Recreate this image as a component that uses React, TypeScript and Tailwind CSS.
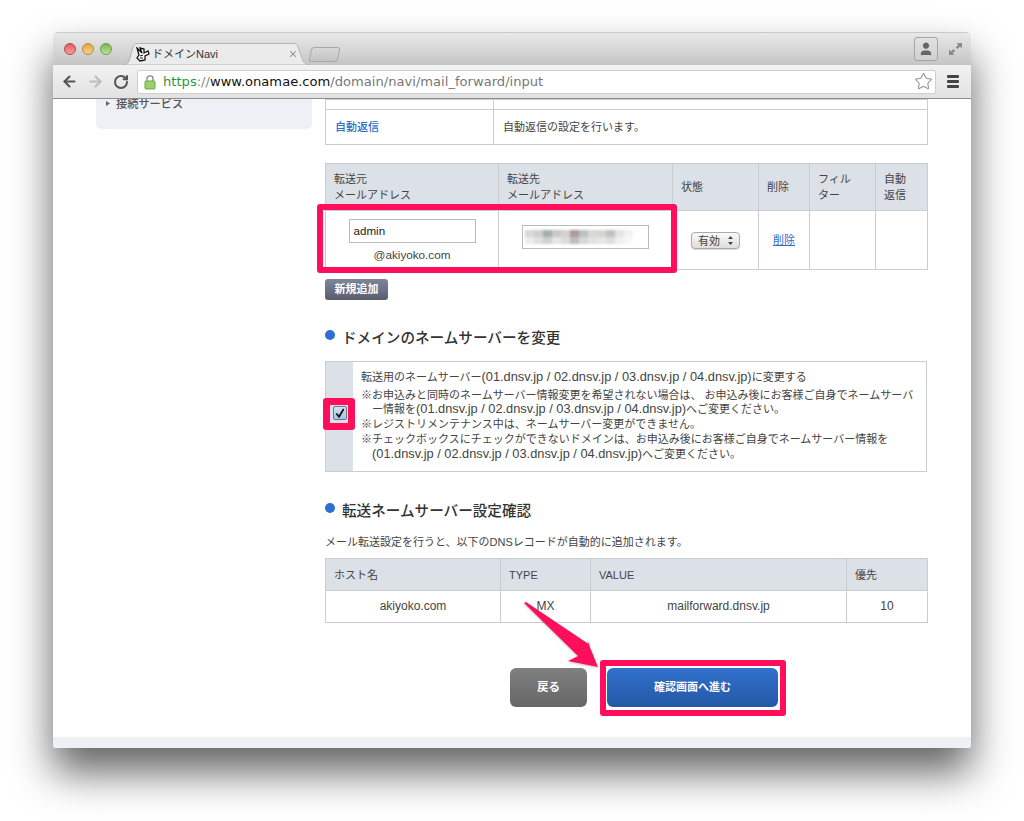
import { ArrowLeft, ArrowRight, RotateCw, Star, User, X } from "lucide-react";

const font = "font-['Liberation_Sans','Noto_Sans_CJK_JP',sans-serif]";
const headCell = "border border-[#c9ccd1] bg-[#dce0e7] px-[8px] text-left font-normal align-middle";
const bodyCell = "border border-[#c9ccd1] align-middle";

const pixelRows = [
  ["#d8d8d8", "#cfcfcf", "#a3afad", "#c9c9c9", "#d4d0ce", "#ab9c9a", "#bcbfc4", "#d8d8da", "#d6d5cf", "#c0c2c5", "#e4e4e4", "#f2f2f2"],
  ["#ececec", "#dfdfdf", "#d0d0d0", "#e6e6e6", "#dcdcdc", "#c4bcba", "#d4d6da", "#e2e2e2", "#e8e6e2", "#dedede", "#f0f0f0", "#f8f8f8"],
];

function Latin({ children }: { children: string }) {
  return <span className="text-[12.8px]">{children}</span>;
}

function SectionTitle({ children }: { children: string }) {
  return (
    <div className="flex items-center">
      <span className="mb-[6px] h-[10px] w-[10px] rounded-full bg-[#2c6fd0]" />
      <h2 className="ml-[7px] text-[14.6px] leading-[20px] font-medium text-[#333]">{children}</h2>
    </div>
  );
}

function TabBar() {
  return (
    <div className="relative flex h-[33px] items-center rounded-t-[5px] border-t border-[#c9c9c9] bg-gradient-to-b from-[#e9e9e9] to-[#c5c5c5]">
      <div className="ml-[11px] flex gap-[6px]">
        <span className="h-[12px] w-[12px] rounded-full border border-[#b0484a] bg-gradient-to-b from-[#e2585a] to-[#f5a0a0]" />
        <span className="h-[12px] w-[12px] rounded-full border border-[#b98a40] bg-gradient-to-b from-[#e4a43e] to-[#f9d38c]" />
        <span className="h-[12px] w-[12px] rounded-full border border-[#6f9f52] bg-gradient-to-b from-[#78b450] to-[#bfe49b]" />
      </div>
      {/* tab */}
      <div className="relative ml-[11px] flex h-[22px] w-[188px] items-center self-end">
        <svg className="absolute inset-0" width="188" height="22" viewBox="0 0 188 22">
          <path d="M0 22 C5 22 6 19 7 15 L10 4 C11 1 12 0.5 15 0.5 H170 C173 0.5 174 1 175 4 L179 15 C180 19 182 22 188 22 Z" fill="#ebebeb" stroke="#b4b4b4" />
        </svg>
        <svg className="relative ml-[12px]" width="15" height="15" viewBox="0 0 15 15">
          <path d="M2 1 L7 6 L5 1 L9 2 L9 6 L13 4 L14 7 L10 9 L10 13 L5 14 L2 11 L4 8 Z" fill="#fff" stroke="#111" strokeWidth="1.3" />
          <path d="M5 9 L8 8 M5 11 L8 11" stroke="#111" strokeWidth="1" />
        </svg>
        <span className="relative ml-[2px] text-[11px] text-[#333]">ドメインNavi</span>
        <X className="absolute left-[165px] top-[6px] text-[#8c8c8c]" size={10} strokeWidth={2.5} />
      </div>
      {/* new tab */}
      <div className="-ml-[1px] mt-[10px] h-[15px] w-[29px] -skew-x-12 rounded-[3px] border border-[#a8a8a8] bg-gradient-to-b from-[#d8d8d8] to-[#c4c4c4]" />
      <div className="ml-auto flex items-center">
        <div className="flex h-[24px] w-[24px] flex-col items-center justify-center rounded-[3px] border border-[#a5a5a5] bg-gradient-to-b from-[#e2e2e2] to-[#d0d0d0]">
          <User className="text-[#666]" size={16} fill="#666" strokeWidth={1.5} />
        </div>
        <svg className="ml-[11px] mr-[9px]" width="13" height="14" viewBox="0 0 13 14">
          <path d="M7.5 1 H13 V6.5 L11 4.5 L8.5 7 L6.8 5.3 L9.3 2.8 Z" fill="#8a8a8a" />
          <path d="M0 7.5 L2 9.5 L4.5 7 L6.2 8.7 L3.7 11.2 L5.5 13 H0 Z" fill="#8a8a8a" />
        </svg>
      </div>
    </div>
  );
}

function Toolbar() {
  return (
    <div className="flex h-[34px] items-center border-b border-[#8d8d8d] bg-gradient-to-b from-[#f2f2f2] to-[#e2e2e2]">
      <div className="ml-[8px] flex items-center gap-[9px]">
        <ArrowLeft className="text-[#555]" size={17} strokeWidth={3} />
        <ArrowRight className="text-[#bdbdbd]" size={17} strokeWidth={3} />
        <RotateCw className="text-[#555]" size={16} strokeWidth={3} />
      </div>
      <div className="ml-[8px] flex h-[24px] w-[799px] items-center rounded-[2px] border border-[#cfcfcf] bg-white">
        <svg className="ml-[6px]" width="12" height="16" viewBox="0 0 12 16">
          <path d="M3 7 V4.5 C3 1 9 1 9 4.5 V7" fill="none" stroke="#8a8a8a" strokeWidth="1.4" />
          <rect x="1" y="7" width="10" height="8" rx="1" fill="#9ccf6e" stroke="#6ba445" />
        </svg>
        <span className="ml-[7px] font-['DejaVu_Sans',sans-serif] text-[13.1px] whitespace-nowrap">
          <span className="text-[#1f9a3c]">https</span>
          <span className="text-[#888]">://</span>
          <span className="text-[#111]">www.onamae.com</span>
          <span className="text-[#777]">/domain/navi/mail_forward/input</span>
        </span>
        <Star className="ml-auto mr-[2px] text-[#8f8f8f]" size={19} strokeWidth={1.3} />
      </div>
      <div className="ml-[11px] flex flex-col gap-[2px]">
        <span className="h-[3px] w-[12px] rounded-[1px] bg-[#444]" />
        <span className="h-[3px] w-[12px] rounded-[1px] bg-[#444]" />
        <span className="h-[3px] w-[12px] rounded-[1px] bg-[#444]" />
      </div>
    </div>
  );
}

function ForwardTable() {
  return (
    <table className="mt-[18px] w-[602px] table-fixed border-collapse text-[11px] leading-[16px] text-[#444]">
      <colgroup>
        <col className="w-[173px]" />
        <col className="w-[174px]" />
        <col className="w-[86px]" />
        <col className="w-[51px]" />
        <col className="w-[66px]" />
        <col className="w-[52px]" />
      </colgroup>
      <thead>
        <tr className="h-[47px]">
          <th className={headCell}>転送元<br />メールアドレス</th>
          <th className={headCell}>転送先<br />メールアドレス</th>
          <th className={headCell}>状態</th>
          <th className={headCell}>削除</th>
          <th className={headCell}>フィル<br />ター</th>
          <th className={headCell}>自動<br />返信</th>
        </tr>
      </thead>
      <tbody>
        <tr className="h-[59px]">
          <td className={bodyCell}>
            <div className="flex flex-col items-center">
              <div className="flex h-[24px] w-[127px] items-center border border-[#bbb] pl-[4px] text-[11.6px] text-[#222]">admin</div>
              <span className="mt-[4px] text-[11.7px] leading-[15px]">@akiyoko.com</span>
            </div>
          </td>
          <td className={bodyCell}>
            <div className="mx-auto mb-[6px] flex h-[24px] w-[127px] items-center border border-[#bbb] pl-[2px]">
              <div className="flex flex-col blur-[1px]">
                {pixelRows.map((row, r) => (
                  <div key={r} className="flex h-[7px]">
                    {row.map((color, i) => (
                      <span key={i} className="h-full w-[9px]" style={{ background: color }} />
                    ))}
                  </div>
                ))}
              </div>
            </div>
          </td>
          <td className={bodyCell}>
            <div className="mx-auto mt-[1px] flex h-[17px] w-[49px] items-center justify-between rounded-[4px] border border-[#aaa] bg-gradient-to-b from-[#fafafa] to-[#dedede] px-[6px] text-[11px] shadow-[0_1px_1px_rgba(0,0,0,0.15)]">
              <span>有効</span>
              <svg width="5" height="9" viewBox="0 0 5 9">
                <path d="M2.5 0 L5 3 H0 Z M2.5 9 L0 6 H5 Z" fill="#444" />
              </svg>
            </div>
          </td>
          <td className={`${bodyCell} text-center`}>
            <a className="text-[#2a6fc9] underline">削除</a>
          </td>
          <td className={bodyCell} />
          <td className={bodyCell} />
        </tr>
      </tbody>
    </table>
  );
}

function NameServerBox() {
  return (
    <div className="mt-[13px] flex h-[111px] w-[602px] border border-[#c9ccd1]">
      <div className="flex w-[27px] shrink-0 items-center justify-center bg-[#dce0e7] pb-[7px]">
        <div className="z-10 flex h-[14px] w-[14px] items-center justify-center rounded-[2px] border border-[#6b7a90] bg-gradient-to-b from-[#d5e2f2] to-[#a9c1df]">
          <svg width="13" height="13" viewBox="0 0 13 13">
            <path d="M2.5 6.5 L5.5 10 L10.5 1.5" fill="none" stroke="#111" strokeWidth="2" />
          </svg>
        </div>
      </div>
      <div className="pl-[8px] pr-[6px] pt-[8px] text-[11px] leading-[14.7px] text-[#444]">
        <p className="mb-[3px]">転送用のネームサーバー<Latin>(01.dnsv.jp / 02.dnsv.jp / 03.dnsv.jp / 04.dnsv.jp)</Latin>に変更する</p>
        <p className="pl-[11px] -indent-[11px]">※お申込みと同時のネームサーバー情報変更を希望されない場合は、 お申込み後にお客様ご自身でネームサーバー情報を<Latin>(01.dnsv.jp / 02.dnsv.jp / 03.dnsv.jp / 04.dnsv.jp)</Latin>へご変更ください。</p>
        <p className="pl-[11px] -indent-[11px]">※レジストリメンテナンス中は、ネームサーバー変更ができません。</p>
        <p className="pl-[11px] -indent-[11px]">※チェックボックスにチェックができないドメインは、お申込み後にお客様ご自身でネームサーバー情報を<Latin>(01.dnsv.jp / 02.dnsv.jp / 03.dnsv.jp / 04.dnsv.jp)</Latin>へご変更ください。</p>
      </div>
    </div>
  );
}

function DnsTable() {
  return (
    <table className="mt-[8px] w-[602px] table-fixed border-collapse text-[11px] text-[#444]">
      <colgroup>
        <col className="w-[175px]" />
        <col className="w-[90px]" />
        <col className="w-[256px]" />
        <col className="w-[81px]" />
      </colgroup>
      <thead>
        <tr className="h-[32px]">
          <th className={`${headCell} pt-[1px]`}>ホスト名</th>
          <th className={`${headCell} pt-[1px]`}>TYPE</th>
          <th className={`${headCell} pt-[1px]`}>VALUE</th>
          <th className={`${headCell} pt-[1px]`}>優先</th>
        </tr>
      </thead>
      <tbody>
        <tr className="h-[32px] text-center text-[12px]">
          <td className={`${bodyCell} pb-[2px]`}>akiyoko.com</td>
          <td className={`${bodyCell} pb-[2px]`}>MX</td>
          <td className={`${bodyCell} pb-[2px]`}>mailforward.dnsv.jp</td>
          <td className={`${bodyCell} pb-[2px]`}>10</td>
        </tr>
      </tbody>
    </table>
  );
}

export default function App() {
  return (
    <div className={`relative h-[821px] w-[1024px] overflow-hidden bg-white pl-[53px] pt-[32px] ${font}`}>
      <div className="flex h-[716px] w-[918px] flex-col overflow-hidden rounded-t-[5px] rounded-b-[3px] bg-white shadow-[0_24px_42px_rgba(0,0,0,0.62)]">
        <TabBar />
        <Toolbar />
        <div className="flex flex-1 overflow-hidden pl-[43px]">
          <aside className="flex h-[30px] w-[216px] items-start rounded-b-[5px] bg-[#edf0f5] pl-[10px] text-[11.2px] font-medium leading-[10px] text-[#555]">
            <svg className="mt-[2px]" width="4" height="5" viewBox="0 0 4 5">
              <path d="M0 0 L4 2.5 L0 5 Z" fill="#666" />
            </svg>
            <span className="ml-[6px]">接続サービス</span>
          </aside>
          <main className="ml-[13px] w-[602px] text-[#444]">
            <table className="w-[602px] table-fixed border-collapse text-[11px]">
              <colgroup>
                <col className="w-[168px]" />
                <col className="w-[434px]" />
              </colgroup>
              <tbody>
                <tr className="h-[10px]">
                  <td className={bodyCell} />
                  <td className={bodyCell} />
                </tr>
                <tr className="h-[35px]">
                  <td className={`${bodyCell} pl-[9px] font-medium text-[#2a6fc9]`}>自動返信</td>
                  <td className={`${bodyCell} pl-[9px]`}>自動返信の設定を行います。</td>
                </tr>
              </tbody>
            </table>
            <ForwardTable />
            <div className="mt-[9px] flex h-[21px] w-[63px] items-center justify-center rounded-[3px] bg-gradient-to-b from-[#80869a] to-[#585d70] text-[11px] font-bold text-white">新規追加</div>
            <div className="mt-[28px]">
              <SectionTitle>ドメインのネームサーバーを変更</SectionTitle>
            </div>
            <NameServerBox />
            <div className="mt-[29px]">
              <SectionTitle>転送ネームサーバー設定確認</SectionTitle>
            </div>
            <p className="mt-[13px] text-[11px] leading-[16px]">メール転送設定を行うと、以下のDNSレコードが自動的に追加されます。</p>
            <DnsTable />
            <div className="ml-[185px] mt-[45px] flex gap-[20px]">
              <button className="flex h-[39px] w-[77px] items-center justify-center rounded-[6px] bg-gradient-to-b from-[#808080] to-[#666] text-[11.5px] font-bold text-white">戻る</button>
              <button className="flex h-[39px] w-[171px] items-center justify-center rounded-[6px] bg-gradient-to-b from-[#3171cd] to-[#2458a6] text-[11px] font-bold text-white">確認画面へ進む</button>
            </div>
          </main>
        </div>
        <div className="h-[11px] bg-[#edf0f5]" />
      </div>

      {/* screenshot annotations */}
      <div className="absolute left-[317px] top-[204px] h-[69px] w-[360px] rounded-[3px] border-[6px] border-[#ff0f5b]" />
      <div className="absolute left-[323px] top-[398px] h-[32px] w-[32px] rounded-[3px] border-[7px] border-[#ff0f5b]" />
      <div className="absolute left-[600px] top-[660px] h-[56px] w-[186px] rounded-[3px] border-[6px] border-[#ff0f5b]" />
      <svg className="absolute left-[515px] top-[595px]" width="100" height="85" viewBox="0 0 100 85">
        <polygon points="9,8 11,7 75,50 72,45 83,72 53,66 63,61" fill="#ff0f5b" style={{ filter: "drop-shadow(0 1px 1px rgba(0,0,0,0.25))" }} />
      </svg>
    </div>
  );
}
